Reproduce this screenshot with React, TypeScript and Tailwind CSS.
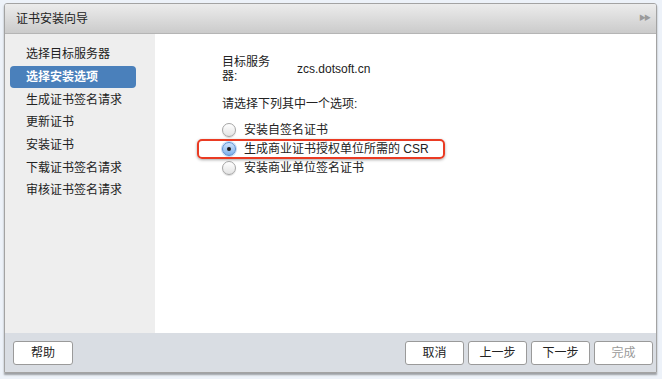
import React from "react";

const steps = ["选择目标服务器", "选择安装选项", "生成证书签名请求", "更新证书", "安装证书", "下载证书签名请求", "审核证书签名请求"];
const options = ["安装自签名证书", "生成商业证书授权单位所需的 CSR", "安装商业单位签名证书"];

function Radio({ checked }: { checked?: boolean }) {
  return (
    <span
      className={
        "flex h-[14px] w-[14px] shrink-0 items-center justify-center rounded-full border " +
        (checked
          ? "border-[#5a8fd0] bg-gradient-to-b from-[#cfe3fb] to-[#7fb1ec] shadow-[0_0_0_1px_rgba(90,150,230,0.35)]"
          : "border-[#a5a5a5] bg-gradient-to-b from-white to-[#e3e3e3] shadow-[0_1px_1px_rgba(0,0,0,0.15)]")
      }
    >
      {checked && <span className="h-[4px] w-[4px] rounded-full bg-[#1a1a1a]" />}
    </span>
  );
}

function Btn({ label, disabled, className = "" }: { label: string; disabled?: boolean; className?: string }) {
  return (
    <button
      className={
        "h-[24px] w-[59px] rounded-[3px] border border-[#9a9a9a] bg-white text-[12px] " +
        (disabled ? "text-[#9a9a9a] " : "text-[#222] ") +
        className
      }
    >
      {label}
    </button>
  );
}

export default function App() {
  return (
    <div
      className="h-[379px] w-[662px] bg-[#edf2f9] pl-[4px] pr-[5px] pt-[3px]"
      style={{ fontFamily: '"Liberation Sans", "Noto Sans CJK SC", sans-serif' }}
    >
      <div className="flex h-[370px] flex-col overflow-hidden rounded-t-[3px] border border-[#a3a3a3] shadow-[0_2px_2px_rgba(0,0,0,0.35)]">
        <div className="flex h-[30px] shrink-0 items-center justify-between border-b border-[#b5b5b5] bg-gradient-to-b from-[#ececec] to-[#cbcbcb] pl-[11px] pr-[7px]">
          <span className="text-[12px] text-[#222]">证书安装向导</span>
          <span className="text-[7px] tracking-[-2px] text-[#9a9a9a]">▶▶</span>
        </div>
        <div className="flex min-h-0 flex-1">
          <div className="flex w-[150px] shrink-0 flex-col bg-[#eeeeee] px-[5px] pt-[9px]">
            {steps.map((s, i) => (
              <div
                key={s}
                className={
                  "flex h-[22.7px] items-center rounded-[4px] pl-[16px] text-[12px] " +
                  (i === 1 ? "w-[126px] bg-[#4a80bb] font-bold text-white" : "text-[#222]")
                }
              >
                {s}
              </div>
            ))}
          </div>
          <div className="flex flex-1 flex-col bg-white pl-[67px] pt-[21px] text-[12px] text-[#222]">
            <div className="flex items-center">
              <div className="w-[58px] leading-[14px]">目标服务器:</div>
              <div className="ml-[17px]">zcs.dotsoft.cn</div>
            </div>
            <div className="mt-[12px]">请选择下列其中一个选项:</div>
            <div className="mt-[7px] flex flex-col">
              {options.map((o, i) => (
                <div key={o} className="relative flex h-[19px] items-center gap-[8px]">
                  {i === 1 && (
                    <div className="absolute left-[-25px] top-[0px] h-[20px] w-[248px] rounded-[5px] border-2 border-[#ea3b23] shadow-[0_1px_3px_rgba(0,0,0,0.35)]" />
                  )}
                  <Radio checked={i === 1} />
                  <span>{o}</span>
                </div>
              ))}
            </div>
          </div>
        </div>
        <div className="flex h-[39px] shrink-0 items-center justify-between bg-[#d9dde3] pl-[8px] pr-[3px]">
          <Btn label="帮助" className="w-[60px]" />
          <div className="flex gap-[4px]">
            <Btn label="取消" />
            <Btn label="上一步" />
            <Btn label="下一步" />
            <Btn label="完成" disabled />
          </div>
        </div>
      </div>
    </div>
  );
}
